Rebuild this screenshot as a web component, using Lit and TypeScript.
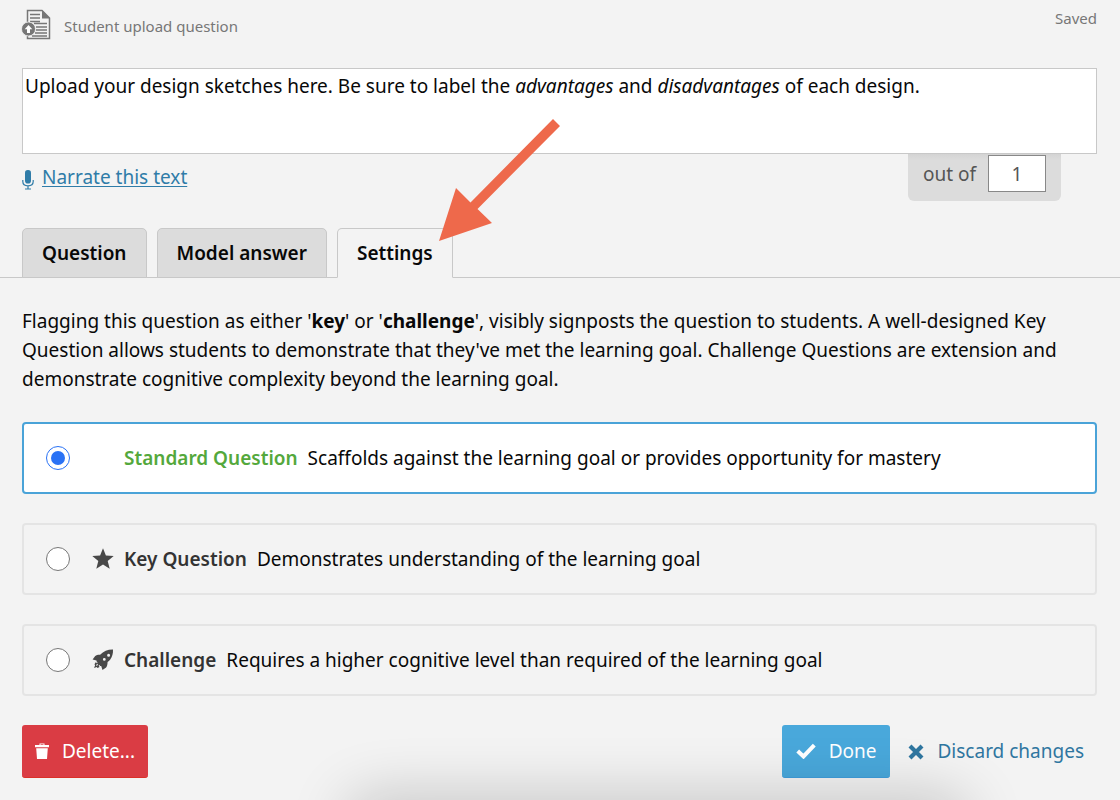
import { LitElement, html, css, svg } from "lit";
import { customElement, state } from "lit/decorators.js";

const star = svg`<svg class="glyph" viewBox="0 0 22 22" aria-hidden="true"><path fill="currentColor" d="M11 .3l2.900 7.200 7.800.5-6 5 2 7.700-6.700-4.200-6.700 4.200 2-7.700-6-5 7.800-.5z"/></svg>`;

const rocket = svg`<svg class="glyph" viewBox="0 0 22 22" aria-hidden="true">
  <path fill="currentColor" fill-rule="evenodd" d="M21 .5c.2 4-.8 7.600-2.900 10.200-.8 1-1.700 1.700-2.500 2.400-.1 2.600-.5 4.300-1.500 5.400l-3.600 2.500-1.300-3.900-1.200-.1-.5-1.200-.8.900.9 1.200-2.100 1-.8-.8-2.600 1 1-2.800-.6-1 1.200-2 1.200.8.800-.9-1.100-.6-.1-1.200-3.900-1 2.600-3.500c1.200-1 2.900-1.300 4.900-1.200C11.700 2.300 15.700.4 21 .5zM16.600 4.700a1.500 1.500 0 1 0 0 3 1.500 1.500 0 0 0 0-3zM12.300 9a1.400 1.400 0 1 0 0 2.800 1.400 1.400 0 0 0 0-2.800zM5 14.600l-1 2.400 2.200-.9z"/>
</svg>`;

interface Kind {
  id: string;
  name: string;
  text: string;
  icon: unknown;
}

const KINDS: Kind[] = [
  { id: "standard", name: "Standard Question", text: "Scaffolds against the learning goal or provides opportunity for mastery", icon: "" },
  { id: "key", name: "Key Question", text: "Demonstrates understanding of the learning goal", icon: star },
  { id: "challenge", name: "Challenge", text: "Requires a higher cognitive level than required of the learning goal", icon: rocket },
];

const TABS = ["Question", "Model answer", "Settings"];

@customElement("app-root")
export class AppRoot extends LitElement {
  @state() private kind = "standard";
  @state() private tab = "Settings";

  static styles = css`
    :host {
      display: block;
      position: relative;
      box-sizing: border-box;
      min-height: 100vh;
      overflow: hidden;
      background: #f3f3f3;
      color: #080808;
      font: 19px/29px "Noto Sans", "Open Sans", sans-serif;
    }
    *, *::before, *::after { box-sizing: border-box; }
    button, input { font: inherit; color: inherit; margin: 0; }
    button { border: 0; background: none; cursor: pointer; }
    svg { display: block; flex: none; }

    .header {
      display: flex;
      align-items: flex-start;
      justify-content: space-between;
      height: 68px;
      padding: 8px 23px 0 21px;
      color: #777;
      font-size: 15px;
      line-height: 20px;
    }
    .heading {
      display: flex;
      align-items: flex-end;
      gap: 12px;
      margin: 0;
      font-size: 15px;
      line-height: 28px;
      font-weight: 400;
    }
    .upload { width: 31px; height: 32px; }

    .editor {
      min-height: 86px;
      margin: 0 23px 0 22px;
      padding: 3px 2px;
      border: 1px solid #c8c8c8;
      background: #fff;
      outline: none;
    }
    .below {
      display: flex;
      justify-content: space-between;
      align-items: flex-start;
      height: 74px;
      padding: 0 59px 0 22px;
    }
    .narrate {
      display: flex;
      align-items: center;
      gap: 8px;
      padding-top: 9px;
      color: #2f7ca8;
      text-decoration: none;
    }
    .narrate span {
      text-decoration: underline;
      text-decoration-thickness: 1px;
      text-underline-offset: 2px;
    }
    .mic { width: 12px; height: 20px; margin-top: 4px; }
    .marks {
      display: flex;
      gap: 12px;
      padding: 1px 15px 8px;
      border-radius: 0 0 6px 6px;
      background: linear-gradient(#d4d4d4, #dcdcdc 6px);
      color: #555;
      line-height: 38px;
    }
    .marks input {
      width: 58px;
      height: 37px;
      padding: 0;
      border: 1px solid #888;
      border-radius: 0;
      background: #fff;
      text-align: center;
    }

    .tabs {
      display: flex;
      gap: 10px;
      padding: 0 22px;
      border-bottom: 1px solid #c8c8c8;
    }
    .tab {
      height: 50px;
      margin-bottom: -1px;
      padding: 0 19px;
      border: 1px solid #c8c8c8;
      border-radius: 5px 5px 0 0;
      background: #dcdcdc;
      font-weight: 600;
    }
    .tab.on {
      border-bottom-color: #f3f3f3;
      background: #f3f3f3;
    }

    .panel { padding: 29px 23px 22px 22px; }
    .intro { margin: 0 0 28px; }
    .intro b { font-weight: 700; }
    .kinds {
      display: grid;
      gap: 29px;
      margin: 0;
      padding: 0;
      border: 0;
    }
    .kind {
      display: flex;
      align-items: center;
      min-height: 72px;
      padding: 0 22px;
      border: 2px solid #e4e4e4;
      border-radius: 4px;
      cursor: pointer;
    }
    .kind.on { border-color: #4aa3d8; background: #fff; }
    .kind input {
      appearance: none;
      flex: none;
      display: grid;
      place-items: center;
      width: 24px;
      height: 24px;
      border: 1px solid #777;
      border-radius: 50%;
      background: #fff;
    }
    .kind input:checked { border-color: #2a72f5; }
    .kind input:checked::before {
      content: "";
      width: 14px;
      height: 14px;
      border-radius: 50%;
      background: #2a72f5;
    }
    .slot { width: 22px; margin: 0 10px 0 22px; color: #484848; }
    .glyph { width: 22px; height: 22px; }
    .name { margin-right: 10px; color: #333; font-weight: 600; }
    .on .name { color: #54a83c; }

    .actions {
      display: flex;
      align-items: center;
      gap: 18px;
      margin-top: 29px;
    }
    .btn {
      display: flex;
      align-items: center;
      gap: 13px;
      height: 53px;
      padding: 0 13px;
      border-radius: 3px;
      color: #fff;
    }
    .delete { background: #da3c44; margin-right: auto; border-bottom: 1px solid #dc3028; }
    .done { padding: 0 14px; background: #49a8db; border-bottom: 1px solid #3f9ddc; }
    .discard { padding-left: 0; color: #2f76a0; }
    .bin { width: 14px; height: 16px; }
    .tick { width: 20px; height: 16px; }
    .cross { width: 16px; height: 16px; }

    .arrow {
      position: absolute;
      left: 439px;
      top: 118px;
      width: 122px;
      height: 124px;
      pointer-events: none;
    }
    .shade {
      position: absolute;
      left: 360px;
      right: 165px;
      bottom: -40px;
      height: 30px;
      border-radius: 12px;
      box-shadow: 0 0 60px 14px rgba(0, 0, 0, 0.2);
      pointer-events: none;
    }
  `;

  render() {
    return html`
      <header class="header">
        <h1 class="heading">
          <svg class="upload" viewBox="0 0 31 32" aria-hidden="true">
            <path d="M6.500 15V2.500H21L28.500 10V30.500H6.500V26" fill="none" stroke="#777" stroke-width="1.500"/>
            <path d="M21 2v8.500h8z" fill="#777"/>
            <path d="M9 6.500h10M9 10h10M9 13.500h10M13 15.500h13M15 19h11M15 22h11M14 25h12M11 28h15" stroke="#777" stroke-width="1.500"/>
            <circle cx="7.500" cy="21" r="7" fill="#777" stroke="#f3f3f3" stroke-width=".8"/>
            <path d="M7.500 17l3.800 4.200H9V25H6v-3.800H3.700z" fill="#fff"/>
          </svg>
          Student upload question
        </h1>
        <span>Saved</span>
      </header>

      <div class="editor" contenteditable="true" role="textbox" aria-multiline="true" aria-label="Question text">Upload your design sketches here. Be sure to label the <i>advantages</i> and <i>disadvantages</i> of each design.</div>

      <div class="below">
        <a class="narrate" href="#narrate">
          <svg class="mic" viewBox="0 0 12 20" aria-hidden="true">
            <rect x="3" y="0" width="6" height="13.500" rx="2.800" fill="currentColor"/>
            <path d="M.8 10v1.500c0 2.800 2 4.300 5.200 4.300s5.200-1.500 5.200-4.300V10M6 16v3M3 19h6" fill="none" stroke="currentColor" stroke-width="1.200"/>
          </svg>
          <span>Narrate this text</span>
        </a>
        <div class="marks">
          <label for="marks">out of</label>
          <input id="marks" type="text" inputmode="numeric" value="1" />
        </div>
      </div>

      <div class="tabs" role="tablist">
        ${TABS.map(
          (t) => html`<button
            class="tab ${t === this.tab ? "on" : ""}"
            role="tab"
            aria-selected=${t === this.tab ? "true" : "false"}
            @click=${() => (this.tab = t)}
          >${t}</button>`,
        )}
      </div>

      <main class="panel">
        <p class="intro">
          Flagging this question as either '<b>key</b>' or '<b>challenge</b>', visibly signposts the question to
          students. A well-designed Key Question allows students to demonstrate that they've met the learning goal.
          Challenge Questions are extension and demonstrate cognitive complexity beyond the learning goal.
        </p>
        <fieldset class="kinds" aria-label="Question type">
          ${KINDS.map(
            (k) => html`<label class="kind ${k.id === this.kind ? "on" : ""}" for=${k.id}>
              <input
                id=${k.id}
                type="radio"
                name="kind"
                .checked=${k.id === this.kind}
                @change=${() => (this.kind = k.id)}
              />
              <span class="slot">${k.icon}</span>
              <span class="name">${k.name}</span>
              <span>${k.text}</span>
            </label>`,
          )}
        </fieldset>
        <div class="actions">
          <button class="btn delete">
            <svg class="bin" viewBox="0 0 14 16" aria-hidden="true">
              <path d="M0 2h4.500V.5h5V2H14v2.300H0zM1.200 5.200h11.600L12 16H2z" fill="currentColor"/>
              <path d="M5.500 1.300h3V2h-3z" fill="#da3c44"/>
            </svg>
            Delete...
          </button>
          <button class="btn done">
            <svg class="tick" viewBox="0 0 20 16" aria-hidden="true"><path d="M1.700 8l5.800 5.500L18.300 2.200" fill="none" stroke="currentColor" stroke-width="4"/></svg>
            Done
          </button>
          <button class="btn discard">
            <svg class="cross" viewBox="0 0 16 16" aria-hidden="true"><path d="M2 2l12 12M14 2L2 14" fill="none" stroke="currentColor" stroke-width="4.200"/></svg>
            Discard changes
          </button>
        </div>
      </main>

      <div class="shade"></div>
      <svg class="arrow" viewBox="0 0 122 124" aria-hidden="true"><path d="M0 123L17 70l14.500 14.500L114 1l7 7-82.500 83L53 105z" fill="#ee694b"/></svg>
    `;
  }
}
